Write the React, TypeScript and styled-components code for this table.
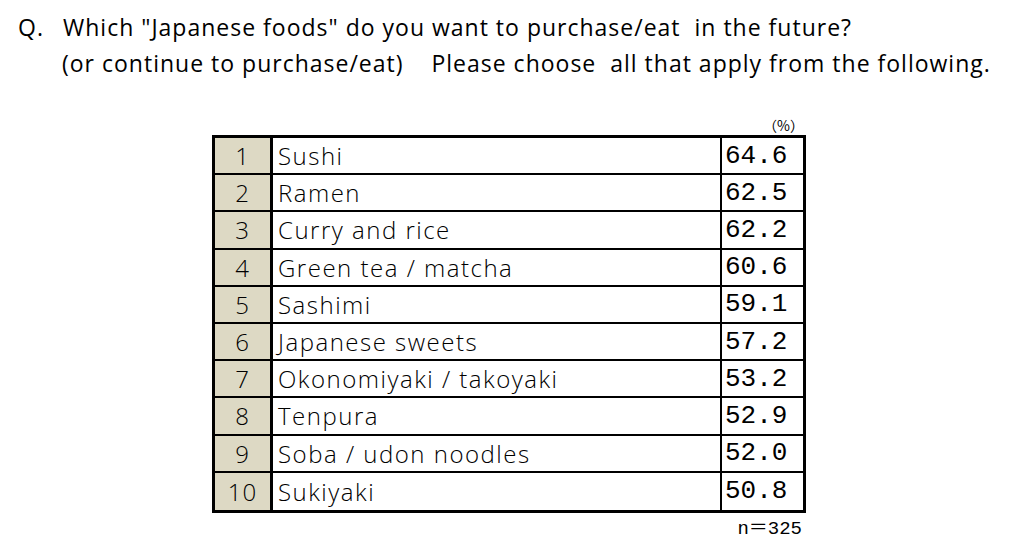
import React from 'react';
import styled, { createGlobalStyle } from 'styled-components';

const GlobalStyle = createGlobalStyle`
  html, body {
    margin: 0;
    padding: 0;
    background: #ffffff;
  }
`;

const Page = styled.div`
  width: 1017px;
  height: 542px;
  background: #ffffff;
  color: #000000;
  overflow: hidden;
`;

const Question = styled.div`
  font-family: "Open Sans", Lato, sans-serif;
  font-size: 23px;
  line-height: 36px;
  letter-spacing: 1px;
  padding: 9px 0 0 18px;
`;

const QLine = styled.div<{ $indent?: boolean }>`
  display: flex;
  white-space: pre;
  padding-left: ${(p) => (p.$indent ? '44px' : '0')};
`;

const QMark = styled.span`
  width: 45px;
`;

const TableWrap = styled.div`
  width: 594px;
  margin: 35px 0 0 212px;
  display: flex;
  flex-direction: column;
  font-family: "Open Sans", "Noto Sans CJK JP", sans-serif;
`;

const Unit = styled.div`
  align-self: flex-end;
  font-family: "Noto Sans CJK JP", sans-serif;
  font-size: 14px;
  line-height: 19px;
  padding-right: 2px;
`;

const Table = styled.div`
  border: 3px solid #000;
  display: flex;
  flex-direction: column;
`;

const Row = styled.div<{ $last?: boolean }>`
  display: grid;
  grid-template-columns: 55px 3px 447px 2px 81px;
  height: ${(p) => (p.$last ? '37px' : '35.2px')};
  border-bottom: ${(p) => (p.$last ? 'none' : '2px solid #000')};
`;

const Rank = styled.div`
  background: #ddd9c4;
  display: flex;
  align-items: center;
  justify-content: center;
  font-size: 24px;
  font-weight: 300;
  letter-spacing: 1px;
`;

const VLine = styled.div`
  background: #000;
`;

const Name = styled.div`
  display: flex;
  align-items: center;
  padding-left: 5px;
  font-size: 24px;
  font-weight: 300;
  letter-spacing: 1.5px;
`;

const Value = styled.div`
  display: flex;
  align-items: center;
  padding-left: 3px;
  font-family: "Liberation Mono", monospace;
  font-size: 26px;
`;

const Sample = styled.div`
  align-self: flex-end;
  font-family: "Liberation Mono", "Noto Sans CJK JP", monospace;
  font-size: 19px;
  line-height: 32px;
  padding-right: 4px;
`;

const rows = [
  ['1', 'Sushi', '64.6'],
  ['2', 'Ramen', '62.5'],
  ['3', 'Curry and rice', '62.2'],
  ['4', 'Green tea / matcha', '60.6'],
  ['5', 'Sashimi', '59.1'],
  ['6', 'Japanese sweets', '57.2'],
  ['7', 'Okonomiyaki / takoyaki', '53.2'],
  ['8', 'Tenpura', '52.9'],
  ['9', 'Soba / udon noodles', '52.0'],
  ['10', 'Sukiyaki', '50.8'],
];

export default function App() {
  return (
    <Page>
      <GlobalStyle />
      <Question>
        <QLine>
          <QMark>Q.</QMark>
          <span>Which "Japanese foods" do you want to purchase/eat  in the future?</span>
        </QLine>
        <QLine $indent>(or continue to purchase/eat)    Please choose  all that apply from the following.</QLine>
      </Question>
      <TableWrap>
        <Unit>（%）</Unit>
        <Table>
          {rows.map(([rank, name, value], i) => (
            <Row key={rank} $last={i === rows.length - 1}>
              <Rank>{rank}</Rank>
              <VLine />
              <Name>{name}</Name>
              <VLine />
              <Value>{value}</Value>
            </Row>
          ))}
        </Table>
        <Sample>n＝325</Sample>
      </TableWrap>
    </Page>
  );
}
